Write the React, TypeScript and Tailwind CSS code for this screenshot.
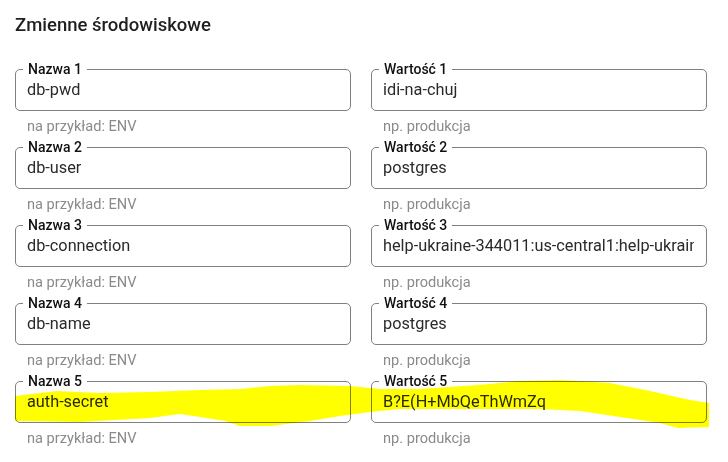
import React from "react";

const rows = [
	["db-pwd", "idi-na-chuj"],
	["db-user", "postgres"],
	["db-connection", "help-ukraine-344011:us-central1:help-ukraine-db"],
	["db-name", "postgres"],
	["auth-secret", "B?E(H+MbQeThWmZq"],
];

const Field = ({ label, value, helper }: { label: string; value: string; helper: string }) => {
	return (
		<div>
			<div className="relative h-[42px] rounded-[5px] border border-[#808080] pl-[11px] pr-[12px]">
				<span className="absolute -top-[11px] left-[7px] bg-white px-[5px] text-[14px] font-medium leading-[20px] text-[#111]">
					{label}
				</span>
				<div className="overflow-hidden whitespace-nowrap text-[16.3px] leading-[40px] text-[#2a2a2a]">{value}</div>
			</div>
			<div className="h-[36px] pl-[12px] pt-[5px] text-[14.6px] leading-[20px] text-[#8a8a8a]">{helper}</div>
		</div>
	);
};

export default function App() {
	return (
		<div className="relative h-[462px] w-[728px] overflow-hidden bg-white" style={{ fontFamily: "Roboto, 'Noto Sans', sans-serif" }}>
			<h2 className="pl-[15px] pt-[13px] text-[18.5px] font-medium leading-[24px] text-[#1f1f1f]">Zmienne środowiskowe</h2>

			{/* pary nazwa / wartość */}
			<div className="mt-[32px] grid grid-cols-2 gap-x-[20px] pl-[15px] pr-[21px]">
				{rows.map(([name, val], i) => (
					<React.Fragment key={i}>
						<Field label={`Nazwa ${i + 1}`} value={name} helper="na przykład: ENV" />
						<Field label={`Wartość ${i + 1}`} value={val} helper="np. produkcja" />
					</React.Fragment>
				))}
			</div>

			{/* zakreślenie markerem */}
			<svg className="pointer-events-none absolute left-0 top-0 mix-blend-multiply" width="728" height="462" viewBox="0 0 728 462">
				<path
					fill="#ffff00"
					d="M15 396 L57 391 L100 393 L150 392 L200 390 L240 389 L270 386 L300 385 L350 386 L380 389 L420 389 L478 385 L520 381 L560 380 L610 383 L650 391 L690 400 L709 403 L709 427 L678 428 L660 423 L620 417 L580 411 L540 409 L478 409 L400 409 L370 412 L340 416 L310 421 L270 426 L240 426 L225 421 L200 417 L180 414 L150 418 L80 422 L15 421 Z"
				/>
			</svg>
		</div>
	);
}
